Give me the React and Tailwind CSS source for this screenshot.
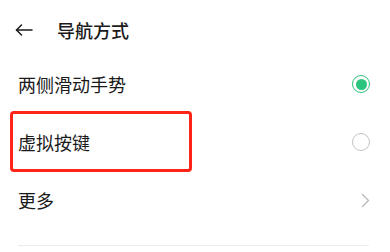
import React from 'react'

const font = { fontFamily: '"Noto Sans CJK SC", "Noto Sans", sans-serif' }

function BackArrow() {
  return (
    <svg width="18" height="12" viewBox="0 0 18 12" fill="none" stroke="#1a1a1a" strokeWidth="1.5" strokeLinecap="round" strokeLinejoin="round">
      <path d="M17 6H1.5" />
      <path d="M6.5 1L1.5 6l5 5" />
    </svg>
  )
}

function Radio({ checked }) {
  if (checked) {
    return (
      <div className="w-[18px] h-[18px] rounded-full border-[1.5px] border-[#2cc47c] flex items-center justify-center">
        <div className="w-[11px] h-[11px] rounded-full bg-[#2cc47c]" />
      </div>
    )
  }
  return <div className="w-[18px] h-[18px] rounded-full border border-[#c4c4c4]" />
}

function Chevron() {
  return (
    <svg width="9" height="15" viewBox="0 0 9 15" fill="none" stroke="#b8b8b8" strokeWidth="1.3" strokeLinecap="round" strokeLinejoin="round">
      <path d="M1.5 1.5l6 6-6 6" />
    </svg>
  )
}

function Row({ label, children, highlight }) {
  return (
    <div className="relative h-[58px] flex items-center justify-between pl-[18px] pr-[20px]">
      <span className="text-[18px] leading-none text-[#1a1a1a]">{label}</span>
      {children}
      {highlight && (
        <div className="absolute left-[10px] top-[-2px] w-[182px] h-[61px] border-[3px] border-[#ff2418] rounded-[4px] pointer-events-none" />
      )}
    </div>
  )
}

export default function App() {
  return (
    <div className="w-[390px] h-[252px] bg-white overflow-hidden" style={font}>
      <div className="h-[55px] pt-[5px] flex items-center">
        <div className="w-[57px] pl-[15px] flex items-center">
          <BackArrow />
        </div>
        <span className="text-[18px] leading-none font-medium text-[#1a1a1a]">导航方式</span>
      </div>
      <Row label="两侧滑动手势">
        <Radio checked />
      </Row>
      <Row label="虚拟按键" highlight>
        <Radio />
      </Row>
      <Row label="更多">
        <Chevron />
      </Row>
      <div className="mt-[16px] ml-[18px] mr-[21px] h-px bg-[#ececec]" />
    </div>
  )
}
